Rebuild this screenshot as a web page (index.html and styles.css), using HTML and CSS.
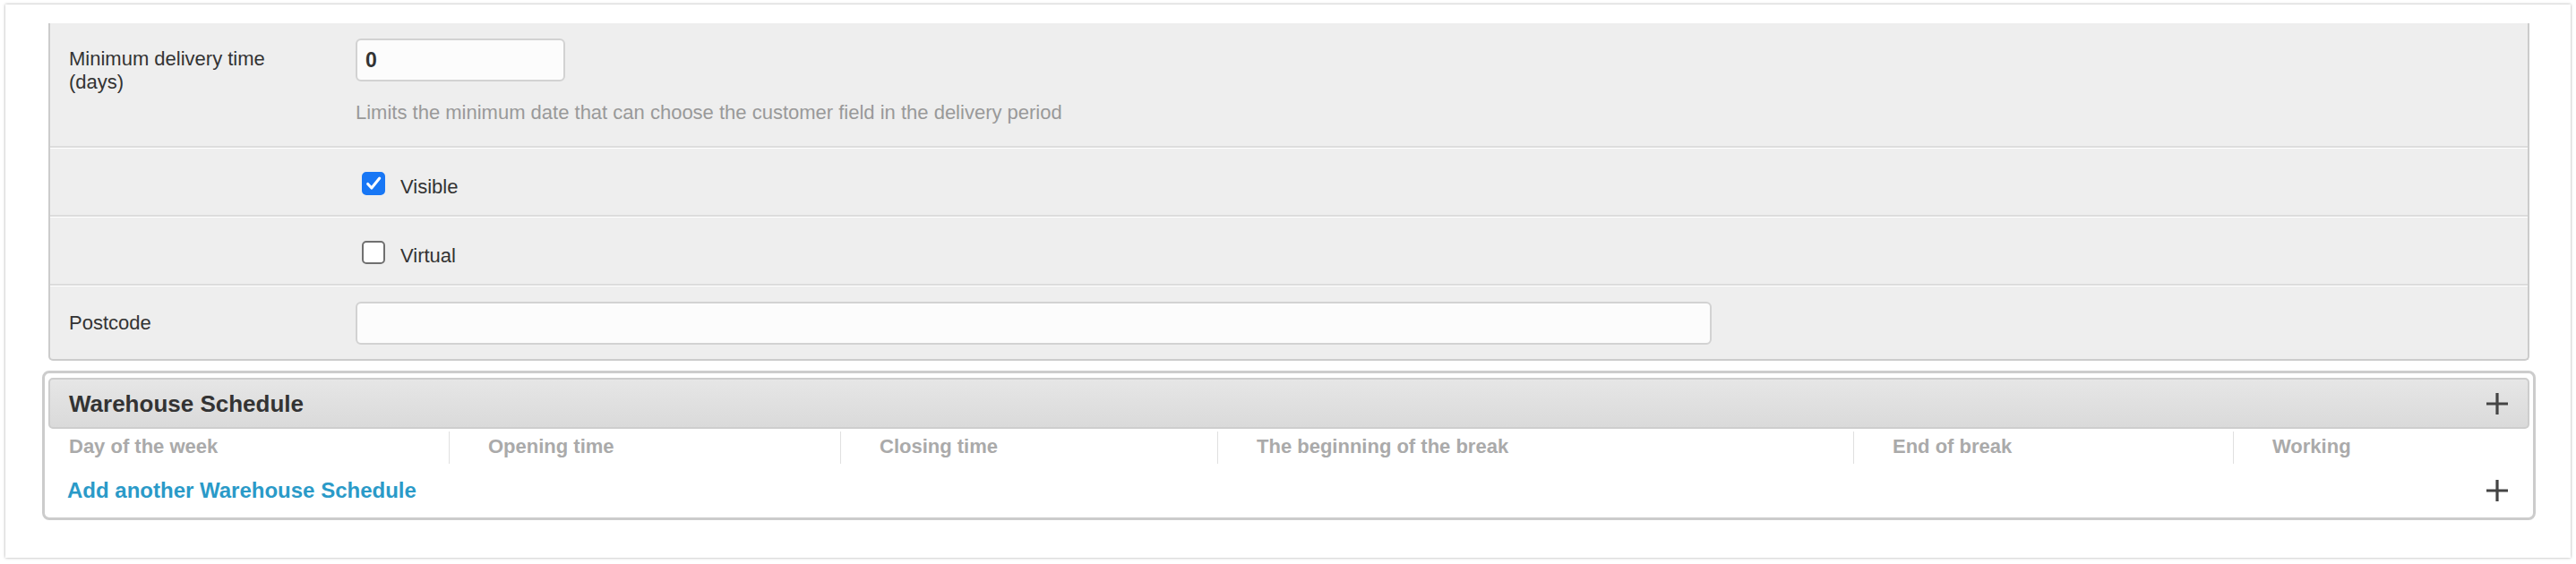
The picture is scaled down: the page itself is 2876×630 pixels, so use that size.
FILE: index.html
```html
<!DOCTYPE html>
<html lang="en">
<head>
    <meta charset="UTF-8">
    <meta name="viewport" content="width=device-width, initial-scale=1.0">
    <title>Warehouse - Change</title>
    <link rel="stylesheet" href="styles.css">
</head>
<body>
    <div class="card">
        <div class="module">
            <div class="form-row">
                <label class="row-label" for="min_days">Minimum delivery time<br>(days)</label>
                <div class="field">
                    <input type="text" id="min_days" class="input input-small" value="0">
                    <p class="help">Limits the minimum date that can choose the customer field in the delivery period</p>
                </div>
            </div>
            <div class="form-row check-row">
                <span></span>
                <label class="check">
                    <span class="box on">
                        <svg viewBox="0 0 26 26" width="26" height="26"><path d="M5.5 13.5l5 5.5L21 6" fill="none" stroke="#fff" stroke-width="3.6" stroke-linecap="round" stroke-linejoin="round"/></svg>
                    </span>
                    <span class="check-text">Visible</span>
                </label>
            </div>
            <div class="form-row check-row">
                <span></span>
                <label class="check">
                    <span class="box"></span>
                    <span class="check-text">Virtual</span>
                </label>
            </div>
            <div class="form-row">
                <label class="row-label" for="postcode">Postcode</label>
                <div class="field">
                    <input type="text" id="postcode" class="input input-wide" value="">
                </div>
            </div>
        </div>

        <div class="inline-group">
            <div class="inline-head">
                <h2>Warehouse Schedule</h2>
                <svg class="plus" viewBox="0 0 24 24" width="24" height="24"><path d="M12 0v24M0 12h24" stroke="#444" stroke-width="3.2"/></svg>
            </div>
            <div class="cols">
                <div class="col">Day of the week</div>
                <div class="col">Opening time</div>
                <div class="col">Closing time</div>
                <div class="col">The beginning of the break</div>
                <div class="col">End of break</div>
                <div class="col">Working</div>
            </div>
            <div class="add-row">
                <a href="#" class="add-link">Add another Warehouse Schedule</a>
                <svg class="plus" viewBox="0 0 24 24" width="24" height="24"><path d="M12 0v24M0 12h24" stroke="#444" stroke-width="3.2"/></svg>
            </div>
        </div>
    </div>
</body>
</html>
```

FILE: styles.css
```css
* { margin: 0; padding: 0; box-sizing: border-box; }
body { font-family: 'Liberation Sans', Arial, Helvetica, sans-serif; background: #fff; color: #333; }
.card {
    margin: 5px 6px 7px; padding: 21px 39px 42px 41px; background: #fff;
    box-shadow: 0 0 3px rgba(0,0,0,0.35);
}

/* fieldset with the plain form rows */
.module {
    margin: 0 7px; background: #eee; border: 2px solid #ccc; border-top: none;
    border-radius: 0 0 5px 5px;
}
.form-row {
    display: grid; grid-template-columns: 320px 1fr; padding: 17px 21px 24px;
    border-bottom: 2px solid #dcdcdc;
}
.form-row + .form-row { border-top: 1px solid #fff; }
.form-row:last-child { border-bottom: none; padding-bottom: 16px; }
.row-label { font-size: 22px; line-height: 26px; padding-top: 10px; color: #333; }
.form-row:last-child .row-label { padding-top: 11px; }
.input {
    display: block; height: 48px; border: 2px solid #d2d2d2; border-radius: 6px; background: #fcfcfc;
    padding: 0 9px; font-family: inherit; font-size: 23px; font-weight: 700; color: #333;
}
.input:focus { outline: none; border-color: #aaa; }
.input-small { width: 234px; }
.input-wide { width: 1514px; }
.help { margin-top: 22px; font-size: 22px; line-height: 26px; color: #999; }

.check-row { padding: 20px 21px 16px; }
.check { display: flex; align-items: center; gap: 17px; height: 38px; padding-left: 7px; font-size: 22px; line-height: 26px; }
.box {
    width: 26px; height: 26px; border: 2px solid #707070; border-radius: 5px; background: #fff;
    display: flex; align-items: center; justify-content: center; flex-shrink: 0;
}
.box.on { background: #1877f5; border-color: #1877f5; }
.box svg { display: block; }
.check-text { padding-top: 8px; }

/* tabular inline */
.inline-group {
    margin-top: 11px; border: 3px solid #ccc; border-radius: 8px; padding: 5px 4px 0;
}
.inline-head {
    display: flex; align-items: center; justify-content: space-between;
    padding: 12px 22px 11px 21px; border: 2px solid #cdcdcd; border-radius: 5px;
    background: linear-gradient(to bottom, #e6e6e6 0%, #dadada 100%);
}
.inline-head h2 { font-size: 26px; line-height: 30px; font-weight: 700; color: #333; }
.plus { display: block; flex-shrink: 0; }
.cols { display: grid; grid-template-columns: 447px 437px 421px 710px 424px 1fr; margin-top: 3px; }
.col {
    padding: 4px 0 6px 43px; border-left: 1px solid #e0e0e0;
    font-size: 22px; line-height: 26px; font-weight: 700; color: #aaa; white-space: nowrap;
}
.col:first-child { border-left: none; padding-left: 23px; }
.add-row { display: flex; align-items: center; justify-content: space-between; height: 60px; padding: 0 24px 0 21px; }
.add-link { font-size: 24px; line-height: 28px; font-weight: 700; color: #2a9ac8; text-decoration: none; }
.add-link:hover { color: #036; }
```
